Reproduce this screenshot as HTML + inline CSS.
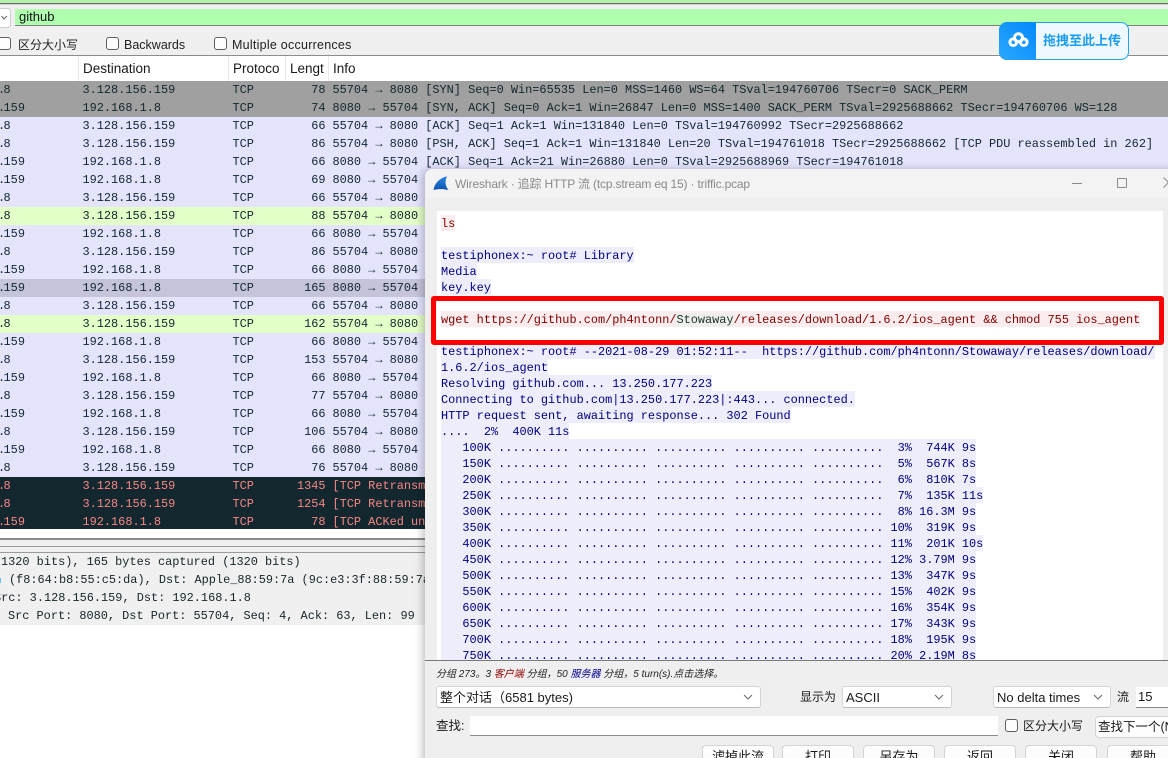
<!DOCTYPE html>
<html><head><meta charset="utf-8">
<style>
html,body{margin:0;padding:0;width:1168px;height:758px;overflow:hidden;background:#fff}
body{position:relative;font-family:"Liberation Sans","Noto Sans CJK SC",sans-serif;font-size:13px;color:#1a1a1a}
.a{position:absolute;white-space:pre}
.m{font-family:"Liberation Mono","DejaVu Sans Mono",monospace;font-size:11.9px}
.r{position:absolute;left:0;width:1168px;height:18px;line-height:19px;overflow:hidden;color:#12272e;font-family:"Liberation Mono",monospace;font-size:11.9px;white-space:pre}
.r span{position:absolute;top:0}
.r i{font-style:normal;letter-spacing:-1.6px}
.r .s{left:-2px}.r .d{left:82.5px}.r .p{left:232.5px}.r .l{right:842.5px}.r .i{left:332.5px}
.g{background:#a0a0a0}.v{background:#e4e4ff}.n{background:#e4ffc7}.h{background:#c6c4da}.k{background:#12272e;color:#f78787}
.hd{position:absolute;top:56px;height:25px;line-height:25px;font-size:13.5px;border-right:1px solid #e8e8e8;box-sizing:border-box;padding-left:4px;white-space:pre}
.cb{position:absolute;width:11px;height:11px;border:1px solid #5f5f5f;border-radius:3px;background:#fdfdfd}
#dlg{position:absolute;left:425px;top:169px;width:760px;height:600px;background:#efefef;border-radius:8px 0 0 0;box-shadow:-3px 0 8px rgba(0,0,0,.22)}
#tb{position:absolute;left:0;top:0;width:100%;height:29px;background:#f3f3f3;border-radius:8px 0 0 0}
#st{position:absolute;left:12px;top:42px;width:726px;height:449px;background:#fff;overflow:hidden;font-family:"Liberation Mono",monospace;font-size:11.9px;line-height:18px}
#st div{position:absolute;left:4px;height:16px;white-space:pre;color:#00007f;background:#ededfb}
#st div.c{color:#7f0000;background:#fbeded}
.sel{position:absolute;height:22px;box-sizing:border-box;background:#fff;border:1px solid #d4d4d4;border-radius:3px;line-height:21px;padding-left:3px;font-size:13px;white-space:pre;border-bottom-color:#bdbdbd}
.sel svg{position:absolute;right:7px;top:7px}
.btn{position:absolute;top:576px;height:30px;width:72px;box-sizing:border-box;background:#fdfdfd;border:1px solid #d4d4d4;border-radius:4px;text-align:center;line-height:22px;font-size:13px}
</style></head><body>

<!-- top strip -->
<div class="a" style="left:0;top:0;width:1168px;height:3px;background:#b5f2a9"></div>
<div class="a" style="left:0;top:3px;width:1168px;height:1px;background:#6b6b6b"></div>
<div class="a" style="left:0;top:4px;width:1168px;height:52px;background:#f0f0f0"></div>
<div class="a" style="left:0;top:55px;width:1168px;height:1px;background:#8c8c8c"></div>
<div class="a" style="left:0;top:4px;width:1168px;height:1px;background:#d0d0d0"></div>
<div class="a" style="left:-8px;top:8px;width:17px;height:18px;background:#fff;border:1px solid #cfcfcf;border-radius:3px"></div>
<svg class="a" style="left:1px;top:15px" width="7" height="5"><path d="M0.5 1L3 4L6 1" fill="none" stroke="#666" stroke-width="1"/></svg>
<div class="a" style="left:15px;top:9px;width:1153px;height:16px;background:#afffaf;border-bottom:1px solid #808080;line-height:15px;font-size:13px;padding-left:4px;box-sizing:content-box;color:#111">github</div>

<div class="cb" style="left:0;top:37px;width:10px;border-left:0;border-radius:0 3px 3px 0"></div>
<div class="a" style="left:18px;top:37px;font-size:12px;line-height:16px;color:#222">区分大小写</div>
<div class="cb" style="left:106px;top:37px"></div>
<div class="a" style="left:124px;top:37px;font-size:12.5px;line-height:16px;color:#222">Backwards</div>
<div class="cb" style="left:214px;top:37px"></div>
<div class="a" style="left:232px;top:37px;font-size:12.5px;letter-spacing:.25px;line-height:16px;color:#222">Multiple occurrences</div>

<!-- header -->
<div class="a" style="left:0;top:56px;width:1168px;height:25px;background:#fff"></div>
<div class="hd" style="left:0;width:79px"></div>
<div class="hd" style="left:79px;width:150px">Destination</div>
<div class="hd" style="left:229px;width:57px">Protoco</div>
<div class="hd" style="left:286px;width:43px">Lengt</div>
<div class="hd" style="left:329px;width:200px;border:0">Info</div>

<!-- baidu widget -->
<div class="a" style="left:999px;top:22px;width:130px;height:38px;box-sizing:border-box;border:1px solid #1ea0fb;border-radius:8px;background:#eef8ff"></div>
<div class="a" style="left:999px;top:22px;width:37px;height:38px;border-radius:8px 0 0 8px;background:linear-gradient(45deg,#2aa8ff,#0388fb)"></div>
<svg class="a" style="left:1008px;top:32px" width="21" height="16" viewBox="0 0 24 18"><g fill="none" stroke="#fff" stroke-width="3.4"><circle cx="12" cy="6.5" r="4.6"/><circle cx="6" cy="11.5" r="3.8"/><circle cx="18" cy="11.5" r="3.8"/></g></svg>
<div class="a" style="left:1043px;top:32px;font-size:13px;font-weight:bold;line-height:18px;color:#1a9cf5">拖拽至此上传</div>

<!-- rows -->
<div class="r g" style="top:81px"><span class="s"><i>.</i>8</span><span class="d">3.128.156.159</span><span class="p">TCP</span><span class="l">78</span><span class="i">55704 → 8080 [SYN] Seq=0 Win=65535 Len=0 MSS=1460 WS=64 TSval=194760706 TSecr=0 SACK_PERM</span></div>
<div class="r g" style="top:99px"><span class="s"><i>.</i>159</span><span class="d">192.168.1.8</span><span class="p">TCP</span><span class="l">74</span><span class="i">8080 → 55704 [SYN, ACK] Seq=0 Ack=1 Win=26847 Len=0 MSS=1400 SACK_PERM TSval=2925688662 TSecr=194760706 WS=128</span></div>
<div class="r v" style="top:117px"><span class="s"><i>.</i>8</span><span class="d">3.128.156.159</span><span class="p">TCP</span><span class="l">66</span><span class="i">55704 → 8080 [ACK] Seq=1 Ack=1 Win=131840 Len=0 TSval=194760992 TSecr=2925688662</span></div>
<div class="r v" style="top:135px"><span class="s"><i>.</i>8</span><span class="d">3.128.156.159</span><span class="p">TCP</span><span class="l">86</span><span class="i">55704 → 8080 [PSH, ACK] Seq=1 Ack=1 Win=131840 Len=20 TSval=194761018 TSecr=2925688662 [TCP PDU reassembled in 262]</span></div>
<div class="r v" style="top:153px"><span class="s"><i>.</i>159</span><span class="d">192.168.1.8</span><span class="p">TCP</span><span class="l">66</span><span class="i">8080 → 55704 [ACK] Seq=1 Ack=21 Win=26880 Len=0 TSval=2925688969 TSecr=194761018</span></div>
<div class="r v" style="top:171px"><span class="s"><i>.</i>159</span><span class="d">192.168.1.8</span><span class="p">TCP</span><span class="l">69</span><span class="i">8080 → 55704</span></div>
<div class="r v" style="top:189px"><span class="s"><i>.</i>8</span><span class="d">3.128.156.159</span><span class="p">TCP</span><span class="l">66</span><span class="i">55704 → 8080</span></div>
<div class="r n" style="top:207px"><span class="s"><i>.</i>8</span><span class="d">3.128.156.159</span><span class="p">TCP</span><span class="l">88</span><span class="i">55704 → 8080</span></div>
<div class="r v" style="top:225px"><span class="s"><i>.</i>159</span><span class="d">192.168.1.8</span><span class="p">TCP</span><span class="l">66</span><span class="i">8080 → 55704</span></div>
<div class="r v" style="top:243px"><span class="s"><i>.</i>8</span><span class="d">3.128.156.159</span><span class="p">TCP</span><span class="l">86</span><span class="i">55704 → 8080</span></div>
<div class="r v" style="top:261px"><span class="s"><i>.</i>159</span><span class="d">192.168.1.8</span><span class="p">TCP</span><span class="l">66</span><span class="i">8080 → 55704</span></div>
<div class="r h" style="top:279px"><span class="s"><i>.</i>159</span><span class="d">192.168.1.8</span><span class="p">TCP</span><span class="l">165</span><span class="i">8080 → 55704</span></div>
<div class="r v" style="top:297px"><span class="s"><i>.</i>8</span><span class="d">3.128.156.159</span><span class="p">TCP</span><span class="l">66</span><span class="i">55704 → 8080</span></div>
<div class="r n" style="top:315px"><span class="s"><i>.</i>8</span><span class="d">3.128.156.159</span><span class="p">TCP</span><span class="l">162</span><span class="i">55704 → 8080</span></div>
<div class="r v" style="top:333px"><span class="s"><i>.</i>159</span><span class="d">192.168.1.8</span><span class="p">TCP</span><span class="l">66</span><span class="i">8080 → 55704</span></div>
<div class="r v" style="top:351px"><span class="s"><i>.</i>8</span><span class="d">3.128.156.159</span><span class="p">TCP</span><span class="l">153</span><span class="i">55704 → 8080</span></div>
<div class="r v" style="top:369px"><span class="s"><i>.</i>159</span><span class="d">192.168.1.8</span><span class="p">TCP</span><span class="l">66</span><span class="i">8080 → 55704</span></div>
<div class="r v" style="top:387px"><span class="s"><i>.</i>8</span><span class="d">3.128.156.159</span><span class="p">TCP</span><span class="l">77</span><span class="i">55704 → 8080</span></div>
<div class="r v" style="top:405px"><span class="s"><i>.</i>159</span><span class="d">192.168.1.8</span><span class="p">TCP</span><span class="l">66</span><span class="i">8080 → 55704</span></div>
<div class="r v" style="top:423px"><span class="s"><i>.</i>8</span><span class="d">3.128.156.159</span><span class="p">TCP</span><span class="l">106</span><span class="i">55704 → 8080</span></div>
<div class="r v" style="top:441px"><span class="s"><i>.</i>159</span><span class="d">192.168.1.8</span><span class="p">TCP</span><span class="l">66</span><span class="i">8080 → 55704</span></div>
<div class="r v" style="top:459px"><span class="s"><i>.</i>8</span><span class="d">3.128.156.159</span><span class="p">TCP</span><span class="l">76</span><span class="i">55704 → 8080</span></div>
<div class="r k" style="top:477px"><span class="s"><i>.</i>8</span><span class="d">3.128.156.159</span><span class="p">TCP</span><span class="l">1345</span><span class="i">[TCP Retransm</span></div>
<div class="r k" style="top:495px"><span class="s"><i>.</i>8</span><span class="d">3.128.156.159</span><span class="p">TCP</span><span class="l">1254</span><span class="i">[TCP Retransm</span></div>
<div class="r k" style="top:513px;height:16px"><span class="s"><i>.</i>159</span><span class="d">192.168.1.8</span><span class="p">TCP</span><span class="l">78</span><span class="i">[TCP ACKed un</span></div>

<!-- details pane -->
<div class="a" style="left:0;top:537.5px;width:425px;height:2px;background:#8c8c8c"></div>
<div class="a" style="left:0;top:540px;width:425px;height:13px;background:#f0f0f0"></div>
<div class="a" style="left:0;top:546px;width:425px;height:1px;background:#9a9a9a"></div>
<div class="a" style="left:0;top:552px;width:425px;height:1px;background:#9a9a9a"></div>
<div class="a" style="left:0;top:553px;width:425px;height:72px;background:#f0f0f0"></div>
<div class="a" style="left:0;top:578px;width:1px;height:5px;background:#6cc0f0"></div>
<div class="a m" style="left:1px;top:553px;line-height:19px;color:#15252a">1320 bits), 165 bytes captured (1320 bits)</div>
<div class="a m" style="left:9px;top:571px;line-height:19px;color:#15252a">(f8:64:b8:55:c5:da), Dst: Apple_88:59:7a (9c:e3:3f:88:59:7a)</div>
<div class="a m" style="left:-6px;top:589px;line-height:19px;color:#15252a">Src: 3.128.156.159, Dst: 192.168.1.8</div>
<div class="a m" style="left:8px;top:607px;line-height:19px;color:#15252a">Src Port: 8080, Dst Port: 55704, Seq: 4, Ack: 63, Len: 99</div>

<!-- dialog -->
<div id="dlg">
 <div id="tb"></div>
 <svg class="a" style="left:8px;top:7px" width="16" height="15" viewBox="0 0 16 15"><defs><linearGradient id="sh" x1="0" y1="0" x2="0" y2="1"><stop offset="0" stop-color="#2a8be0"/><stop offset="1" stop-color="#0f50b4"/></linearGradient></defs><path d="M0.5 14C1.5 7.5 6.5 2 14 0.3C11.8 5 12 10 15.5 14C10 12.8 5 12.8 0.5 14Z" fill="url(#sh)"/></svg>
 <div class="a" style="left:30px;top:6px;line-height:18px;font-size:12px;letter-spacing:-.17px;color:#8a8a8a">Wireshark · 追踪 HTTP 流 (tcp.stream eq 15) · triffic.pcap</div>
 <div class="a" style="left:647px;top:14px;width:10px;height:1px;background:#8a8a8a"></div>
 <div class="a" style="left:692px;top:9px;width:8px;height:8px;border:1px solid #8a8a8a;border-radius:1px"></div>
 <svg class="a" style="left:738px;top:8px" width="8" height="11"><path d="M0.5 0.5L5.5 5.5L0.5 10.5" fill="none" stroke="#8a8a8a"/></svg>

 <div id="st">
  <div class="c" style="top:4px">ls</div>
  <div style="top:36px">testiphonex:~ root# Library</div>
  <div style="top:52px">Media</div>
  <div style="top:68px">key.key</div>
  <div class="c" style="top:100px">wget https://github.com/ph4ntonn/<b style="font-weight:normal;color:#1c3328;background:#eeeeea">Stowaway</b>/releases/download/1.6.2/ios_agent &amp;&amp; chmod 755 ios_agent</div>
  <div style="top:132px">testiphonex:~ root# --2021-08-29 01:52:11--  https://github.com/ph4ntonn/Stowaway/releases/download/</div>
  <div style="top:148px">1.6.2/ios_agent</div>
  <div style="top:164px">Resolving github.com... 13.250.177.223</div>
  <div style="top:180px">Connecting to github.com|13.250.177.223|:443... connected.</div>
  <div style="top:196px">HTTP request sent, awaiting response... 302 Found</div>
  <div style="top:212px">....  2%  400K 11s</div>
  <div style="top:228px">   100K .......... .......... .......... .......... ..........  3%  744K 9s</div>
  <div style="top:244px">   150K .......... .......... .......... .......... ..........  5%  567K 8s</div>
  <div style="top:260px">   200K .......... .......... .......... .......... ..........  6%  810K 7s</div>
  <div style="top:276px">   250K .......... .......... .......... .......... ..........  7%  135K 11s</div>
  <div style="top:292px">   300K .......... .......... .......... .......... ..........  8% 16.3M 9s</div>
  <div style="top:308px">   350K .......... .......... .......... .......... .......... 10%  319K 9s</div>
  <div style="top:324px">   400K .......... .......... .......... .......... .......... 11%  201K 10s</div>
  <div style="top:340px">   450K .......... .......... .......... .......... .......... 12% 3.79M 9s</div>
  <div style="top:356px">   500K .......... .......... .......... .......... .......... 13%  347K 9s</div>
  <div style="top:372px">   550K .......... .......... .......... .......... .......... 15%  402K 9s</div>
  <div style="top:388px">   600K .......... .......... .......... .......... .......... 16%  354K 9s</div>
  <div style="top:404px">   650K .......... .......... .......... .......... .......... 17%  343K 9s</div>
  <div style="top:420px">   700K .......... .......... .......... .......... .......... 18%  195K 9s</div>
  <div style="top:436px">   750K .......... .......... .......... .......... .......... 20% 2.19M 8s</div>
 </div>
 <div class="a" style="left:0;top:491px;width:760px;height:1px;background:#7a7a7a"></div>
 <div class="a" style="left:11px;top:498px;font-size:10px;line-height:15px;font-style:italic;color:#222">分组 273。3 <span style="color:#7f0000;background:#fbeded">客户端</span> 分组，50 <span style="color:#00007f;background:#ededfb">服务器</span> 分组，5 turn(s).点击选择。</div>

 <div class="sel" style="left:11px;top:517px;width:325px">整个对话（6581 bytes)<svg width="10" height="6"><path d="M1 1L5 5L9 1" fill="none" stroke="#666"/></svg></div>
 <div class="a" style="left:375px;top:520px;line-height:17px;font-size:12px">显示为</div>
 <div class="sel" style="left:417px;top:517px;width:110px">ASCII<svg width="10" height="6"><path d="M1 1L5 5L9 1" fill="none" stroke="#666"/></svg></div>
 <div class="sel" style="left:568px;top:517px;width:118px">No delta times<svg width="10" height="6"><path d="M1 1L5 5L9 1" fill="none" stroke="#666"/></svg></div>
 <div class="a" style="left:692px;top:520px;line-height:17px;font-size:12px">流</div>
 <div class="a" style="left:711px;top:518px;width:60px;height:20px;background:#fff;border-bottom:1px solid #8a8a8a;line-height:19px;font-size:13px;padding-left:2px">15</div>

 <div class="a" style="left:11px;top:549px;line-height:17px;font-size:12.5px">查找:</div>
 <div class="a" style="left:45px;top:547px;width:528px;height:19px;background:#fff;border-bottom:1px solid #8a8a8a"></div>
 <div class="cb" style="left:580px;top:550px"></div>
 <div class="a" style="left:598px;top:549px;line-height:17px;font-size:12px">区分大小写</div>
 <div class="a" style="left:670px;top:547px;width:120px;height:22px;box-sizing:border-box;background:#fdfdfd;border:1px solid #d4d4d4;border-radius:4px;line-height:20px;padding-left:2px;font-size:12.5px">查找下一个(N)</div>

 <div class="btn" style="left:277px">滤掉此流</div>
 <div class="btn" style="left:357px">打印</div>
 <div class="btn" style="left:438px">另存为</div>
 <div class="btn" style="left:519px">返回</div>
 <div class="btn" style="left:600px">关闭</div>
 <div class="btn" style="left:682px">帮助</div>
</div>

<!-- red box -->
<div class="a" style="left:431px;top:296px;width:733px;height:49px;box-sizing:border-box;border:5.5px solid #fe0000;border-radius:3px"></div>

</body></html>
